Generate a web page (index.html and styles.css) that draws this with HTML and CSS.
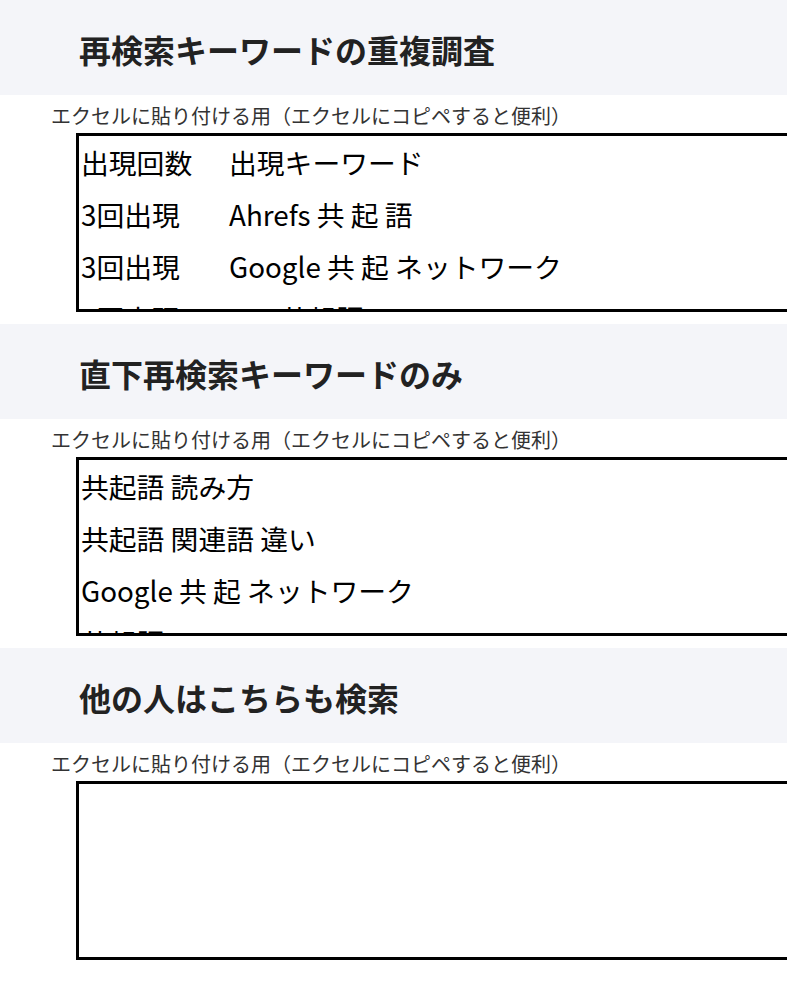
FILE: index.html
```html
<!DOCTYPE html>
<html lang="ja">
<head>
<meta charset="utf-8">
<title>再検索キーワード</title>
<link rel="stylesheet" href="styles.css">
</head>
<body>
<section class="section">
  <div class="section-head"><h2>再検索キーワードの重複調査</h2></div>
  <p class="note">エクセルに貼り付ける用（エクセルにコピペすると便利）</p>
  <div class="box">出現回数	出現キーワード
3回出現	Ahrefs 共 起 語
3回出現	Google 共 起 ネットワーク
2回出現	seo 共起語 ツール</div>
</section>
<section class="section">
  <div class="section-head"><h2>直下再検索キーワードのみ</h2></div>
  <p class="note">エクセルに貼り付ける用（エクセルにコピペすると便利）</p>
  <div class="box">共起語 読み方
共起語 関連語 違い
Google 共 起 ネットワーク
共起語 ツール</div>
</section>
<section class="section">
  <div class="section-head"><h2>他の人はこちらも検索</h2></div>
  <p class="note">エクセルに貼り付ける用（エクセルにコピペすると便利）</p>
  <div class="box"></div>
</section>
</body>
</html>
```
FILE: styles.css
```css
html, body {
  margin: 0;
  padding: 0;
  overflow-x: hidden;
  background: #fff;
}
body {
  font-family: "Noto Sans CJK JP", "Noto Sans", sans-serif;
  color: #000;
  text-spacing-trim: space-all;
}
.section-head {
  background: #f4f5f9;
  height: 95px;
  box-sizing: border-box;
  padding: 26px 0 0 79px;
}
.section-head h2 {
  margin: 0;
  font-size: 32px;
  line-height: 46px;
  font-weight: 700;
  color: #222;
  white-space: nowrap;
}
.note {
  margin: 0;
  padding: 7px 0 0 51px;
  font-size: 20px;
  line-height: 27px;
  color: #333;
  white-space: nowrap;
}
.box {
  margin: 4px 0 12px 76px;
  width: 760px;
  height: 179px;
  box-sizing: border-box;
  border: 3px solid #000;
  padding: 0 2px 2px 2px;
  font-size: 27.8px;
  line-height: 52px;
  white-space: pre;
  tab-size: 148px;
  overflow: hidden;
  color: #000;
}
```
